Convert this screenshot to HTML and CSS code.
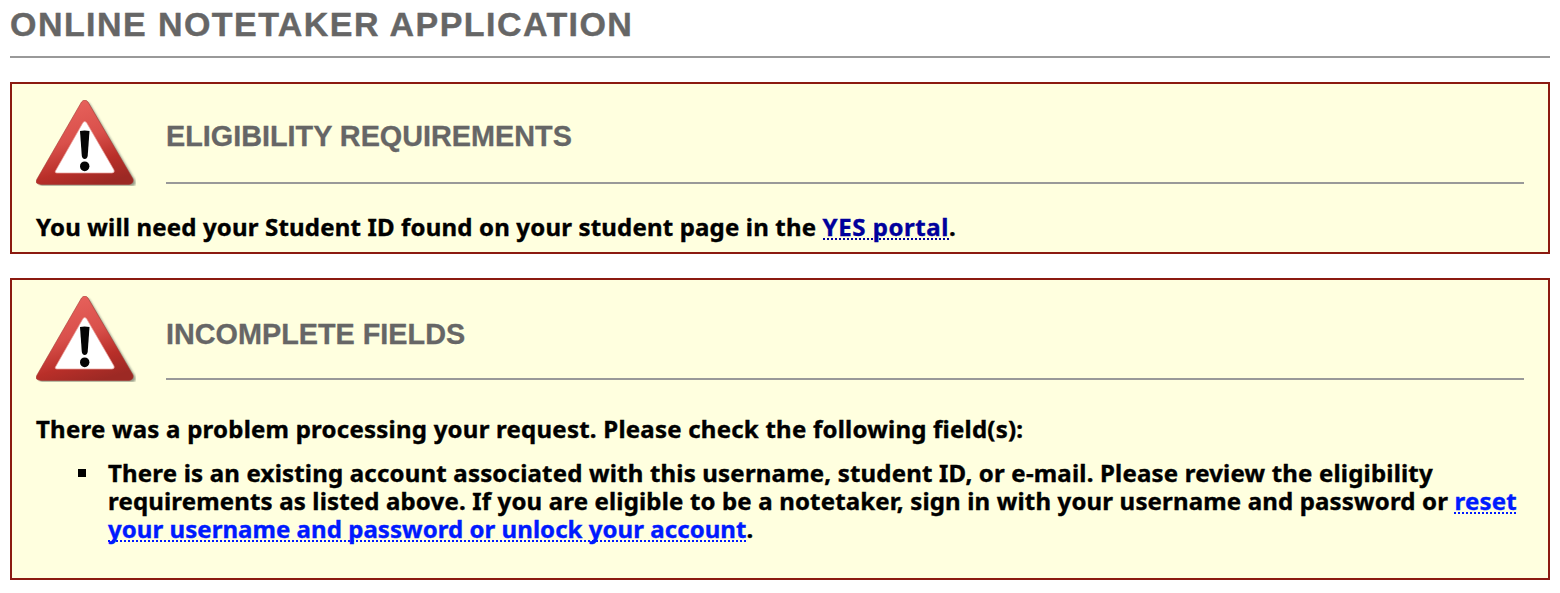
FILE: index.html
```
<!DOCTYPE html>
<html lang="en">
<head>
<meta charset="utf-8">
<title>Online Notetaker Application</title>
<link rel="stylesheet" href="styles.css">
</head>
<body>
<svg class="defs" aria-hidden="true">
  <defs>
    <linearGradient id="red" x1="0.3" y1="0" x2="0.65" y2="1">
      <stop offset="0" stop-color="#e8635d"/>
      <stop offset="0.45" stop-color="#d9504b"/>
      <stop offset="0.75" stop-color="#b92f29"/>
      <stop offset="1" stop-color="#9c2924"/>
    </linearGradient>
    <filter id="soft"><feGaussianBlur stdDeviation="0.8"/></filter>
    <symbol id="warning" viewBox="0 0 100 86">
      <path d="M3 83 L48 3 Q50 0 54 4 L99 80 Q101 86 96 86 H5Z" fill="#5d6558" opacity=".65" filter="url(#soft)"/>
      <path d="M1 79 L45.500 2 Q48.700 -2 52 2 L97 79 Q98 84 93 84.500 H5 Q-2 84 1 79Z" fill="url(#red)" stroke="#a33a35" stroke-width=".6"/>
      <path d="M47 22.500 Q48.700 20.500 50.500 22.500 L78 70 Q79 73 76 73 H21 Q18 73 20 70Z" fill="#fff" stroke="#e99d98" stroke-width=".7"/>
      <path d="M44 31 Q48.500 30 53.500 31 L51.700 56 Q51 59 48.700 59 Q46.500 59 45.800 56Z" fill="#050505"/>
      <ellipse cx="48.700" cy="66.300" rx="4.700" ry="4.900" fill="#050505"/>
    </symbol>
  </defs>
</svg>
<main>
  <h1 class="page-title">Online Notetaker Application</h1>
  <section class="notice eligibility">
    <header class="notice-head">
      <svg class="icon"><use href="#warning"/></svg>
      <h2 class="heading">Eligibility Requirements</h2>
    </header>
    <p class="message">You will need your Student ID found on your student page in the <a class="link visited" href="#">YES portal</a>.</p>
  </section>
  <section class="notice incomplete">
    <header class="notice-head">
      <svg class="icon"><use href="#warning"/></svg>
      <h2 class="heading">Incomplete Fields</h2>
    </header>
    <p class="message">There was a problem processing your request. Please check the following field(s):</p>
    <ul class="errors">
      <li class="error"><div class="error-text">There is an existing account associated with this username, student ID, or e-mail. Please review the eligibility<br><span class="tight">requirements as listed above. If you are eligible to be a notetaker, sign in with your username and password or </span><a class="link" href="#">reset<br><span class="link-tail">your username and password or unlock your account</span></a>.</div></li>
    </ul>
  </section>
</main>
</body>
</html>
```
FILE: styles.css
```
* { box-sizing: border-box; }
body {
  margin: 0;
  padding: 0 10px;
  background: #fff;
  color: #000;
  font: bold 24px/28px "Noto Sans", "Open Sans", sans-serif;
}
.defs { position: absolute; width: 0; height: 0; }
.page-title {
  height: 58px;
  margin: 0 0 24px;
  padding-top: 4px;
  border-bottom: 2px solid #999;
  color: #666;
  font: bold 34px/40px "Liberation Sans", Arial, sans-serif;
  letter-spacing: 1.440px;
  text-transform: uppercase;
  white-space: nowrap;
  -webkit-text-stroke: 0.400px currentColor;
}
.notice {
  margin-bottom: 24px;
  padding: 16px 24px 0;
  border: 2px solid #8b1a10;
  background: #ffffdf;
}
.eligibility { height: 172px; }
.incomplete { height: 302px; }
.notice-head { display: flex; gap: 30px; height: 86px; }
.icon { flex: none; width: 100px; height: 86px; }
.heading {
  flex: 1;
  height: 84px;
  margin: 0;
  padding-top: 20px;
  border-bottom: 2px solid #999;
  color: #666;
  font: bold 28.800px/32px "Liberation Sans", Arial, sans-serif;
  text-transform: uppercase;
  -webkit-text-stroke: 0.300px currentColor;
}
.incomplete .heading { padding-top: 22px; }
.message { margin: 27px 0 0; letter-spacing: 0.170px; white-space: nowrap; }
.message, .error { -webkit-text-stroke: 0.400px currentColor; }
.message .link { letter-spacing: 0.550px; }
.incomplete .message { margin-top: 33px; letter-spacing: 0.230px; }
.errors { margin: 16px 0 0; padding: 0 0 0 42px; list-style: none; }
.error { display: flex; gap: 22px; letter-spacing: 0.190px; white-space: nowrap; }
.error::before {
  content: "";
  flex: none;
  width: 8px;
  height: 8px;
  margin-top: 10px;
  background: #000;
}
.tight { letter-spacing: 0.160px; }
.link {
  color: #001aff;
  -webkit-text-stroke-color: #001aff;
  text-decoration: none;
  background: repeating-linear-gradient(90deg, currentColor 0 2px, transparent 2px 4px) 0 calc(100% - 3px) / 100% 2px no-repeat;
  -webkit-box-decoration-break: clone;
  box-decoration-break: clone;
}
.link-tail { letter-spacing: 0.050px; }
.visited { color: #00009c; -webkit-text-stroke-color: #00009c; }
```
